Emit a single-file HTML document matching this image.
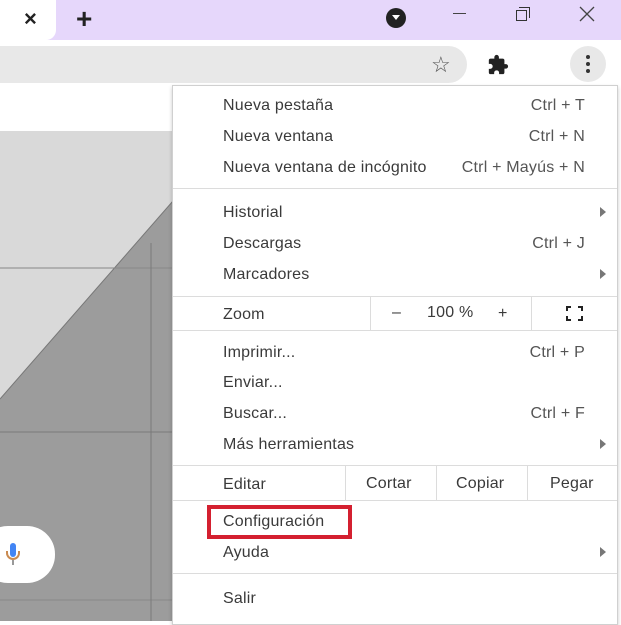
<!DOCTYPE html>
<html><head><meta charset="utf-8"><style>
*{margin:0;padding:0;box-sizing:border-box}
body{width:621px;height:621px;overflow:hidden;position:relative;background:#fff;font-family:"Liberation Sans",sans-serif;color:#333}
.a{position:absolute}
.t{position:absolute;font-size:16px;line-height:20px;letter-spacing:0.2px;white-space:nowrap;color:#3a3a3a}
.r{position:absolute;right:36px;font-size:16px;line-height:20px;letter-spacing:0.2px;color:#555;white-space:nowrap}
.sep{position:absolute;left:173px;width:444px;height:1px;background:#dcdcdc}
.arr{position:absolute;left:600px;width:0;height:0;border-top:5px solid transparent;border-bottom:5px solid transparent;border-left:6px solid #777}
</style></head><body>
<div class="a" style="left:0;top:0;width:621px;height:40px;background:#e6d7fb"></div>
<div class="a" style="left:0;top:0;width:56px;height:40px;background:#fff;border-bottom-right-radius:10px"></div>
<div class="a" style="left:24px;top:6px;font-size:22px;font-weight:bold;color:#222">×</div>
<div class="a" style="left:76px;top:3px;font-size:28px;font-weight:bold;color:#222">+</div>
<div class="a" style="left:386px;top:8px;width:20px;height:20px;border-radius:50%;background:#222"></div>
<div class="a" style="left:392px;top:15px;border-left:4px solid transparent;border-right:4px solid transparent;border-top:5px solid #fff"></div>
<div class="a" style="left:453px;top:13px;width:13px;height:1px;background:#444"></div>
<div class="a" style="left:516px;top:10px;width:11px;height:11px;border:1.5px solid #333"></div>
<div class="a" style="left:519px;top:7px;width:11px;height:11px;border-top:1.5px solid #333;border-right:1.5px solid #333"></div>
<svg class="a" style="left:579px;top:6px" width="16" height="16"><path d="M1 1L15 15M15 1L1 15" stroke="#444" stroke-width="1.3"/></svg>
<div class="a" style="left:0;top:40px;width:621px;height:45px;background:#fff"></div>
<div class="a" style="left:-20px;top:46px;width:487px;height:37px;background:#e8e8e8;border-radius:19px"></div>
<div class="a" style="left:431px;top:52px;font-size:22px;color:#555">☆</div>
<svg class="a" style="left:487px;top:54px" width="22" height="22" viewBox="0 0 24 24"><path fill="#222" d="M20.5 11H19V7a2 2 0 0 0-2-2h-4V3.5a2.5 2.5 0 0 0-5 0V5H4a2 2 0 0 0-2 2v3.8h1.5a2.7 2.7 0 0 1 0 5.4H2V20a2 2 0 0 0 2 2h3.8v-1.5a2.7 2.7 0 0 1 5.4 0V22H17a2 2 0 0 0 2-2v-4h1.5a2.5 2.5 0 0 0 0-5z"/></svg>
<div class="a" style="left:570px;top:46px;width:36px;height:36px;border-radius:50%;background:#e8e8e8"></div>
<div class="a" style="left:586px;top:55px;width:4px;height:4px;border-radius:50%;background:#333;box-shadow:0 7px 0 #333,0 14px 0 #333"></div>
<div class="a" style="left:0;top:131px;width:173px;height:490px;background:#9c9c9c"></div>
<svg class="a" style="left:0;top:131px" width="173" height="490"><polygon points="0,0 173,0 173,70 0,268" fill="#d9d9d9"/><line x1="173" y1="70" x2="0" y2="268" stroke="#777" stroke-width="1"/><line x1="0" y1="137" x2="173" y2="137" stroke="#888"/><line x1="0" y1="301" x2="173" y2="301" stroke="#7a7a7a"/><line x1="0" y1="469" x2="173" y2="469" stroke="#888"/><line x1="151" y1="112" x2="151" y2="490" stroke="#7a7a7a"/></svg>
<div class="a" style="left:-20px;top:526px;width:75px;height:57px;background:#fff;border-radius:28px"></div>
<div class="a" style="left:10px;top:543px;width:6px;height:14px;border-radius:3px;background:#4285f4"></div>
<div class="a" style="left:6px;top:551px;width:14px;height:9px;border:2px solid #c98a50;border-top:none;border-radius:0 0 7px 7px"></div>
<div class="a" style="left:12px;top:560px;width:2px;height:5px;background:#999"></div>
<div class="a" style="left:172px;top:85px;width:446px;height:540px;background:#fff;border:1px solid #d0d0d0;box-shadow:0 2px 4px rgba(0,0,0,.2)"></div>
<div class="t" style="left:223px;top:96px">Nueva pestaña</div><div class="r" style="top:96px">Ctrl + T</div>
<div class="t" style="left:223px;top:127px">Nueva ventana</div><div class="r" style="top:127px">Ctrl + N</div>
<div class="t" style="left:223px;top:158px">Nueva ventana de incógnito</div><div class="r" style="top:158px">Ctrl + Mayús + N</div>
<div class="sep" style="top:188px"></div>
<div class="t" style="left:223px;top:203px">Historial</div><div class="arr" style="top:207px"></div>
<div class="t" style="left:223px;top:234px">Descargas</div><div class="r" style="top:234px">Ctrl + J</div>
<div class="t" style="left:223px;top:265px">Marcadores</div><div class="arr" style="top:269px"></div>
<div class="sep" style="top:296px"></div>
<div class="t" style="left:223px;top:305px">Zoom</div>
<div class="a" style="left:370px;top:296px;width:1px;height:34px;background:#dcdcdc"></div>
<div class="a" style="left:531px;top:296px;width:1px;height:34px;background:#dcdcdc"></div>
<div class="t" style="left:392px;top:303px">–</div>
<div class="t" style="left:427px;top:303px">100 %</div>
<div class="t" style="left:498px;top:304px">+</div>
<div class="a" style="left:566px;top:306px;width:17px;height:15px;border:2.5px solid #222"></div>
<div class="a" style="left:571px;top:304px;width:7px;height:19px;background:#fff"></div>
<div class="a" style="left:564px;top:311px;width:21px;height:5px;background:#fff"></div>
<div class="sep" style="top:330px"></div>
<div class="t" style="left:223px;top:343px">Imprimir...</div><div class="r" style="top:343px">Ctrl + P</div>
<div class="t" style="left:223px;top:373px">Enviar...</div>
<div class="t" style="left:223px;top:404px">Buscar...</div><div class="r" style="top:404px">Ctrl + F</div>
<div class="t" style="left:223px;top:435px">Más herramientas</div><div class="arr" style="top:439px"></div>
<div class="sep" style="top:465px"></div>
<div class="t" style="left:223px;top:475px">Editar</div>
<div class="a" style="left:345px;top:465px;width:1px;height:35px;background:#dcdcdc"></div>
<div class="a" style="left:436px;top:465px;width:1px;height:35px;background:#dcdcdc"></div>
<div class="a" style="left:527px;top:465px;width:1px;height:35px;background:#dcdcdc"></div>
<div class="t" style="left:366px;top:474px">Cortar</div>
<div class="t" style="left:456px;top:474px">Copiar</div>
<div class="t" style="left:550px;top:474px">Pegar</div>
<div class="sep" style="top:500px"></div>
<div class="a" style="left:207px;top:505px;width:145px;height:34px;border:4px solid #d42030"></div>
<div class="t" style="left:223px;top:512px">Configuración</div>
<div class="t" style="left:223px;top:543px">Ayuda</div><div class="arr" style="top:547px"></div>
<div class="sep" style="top:573px"></div>
<div class="t" style="left:223px;top:589px">Salir</div>
</body></html>
